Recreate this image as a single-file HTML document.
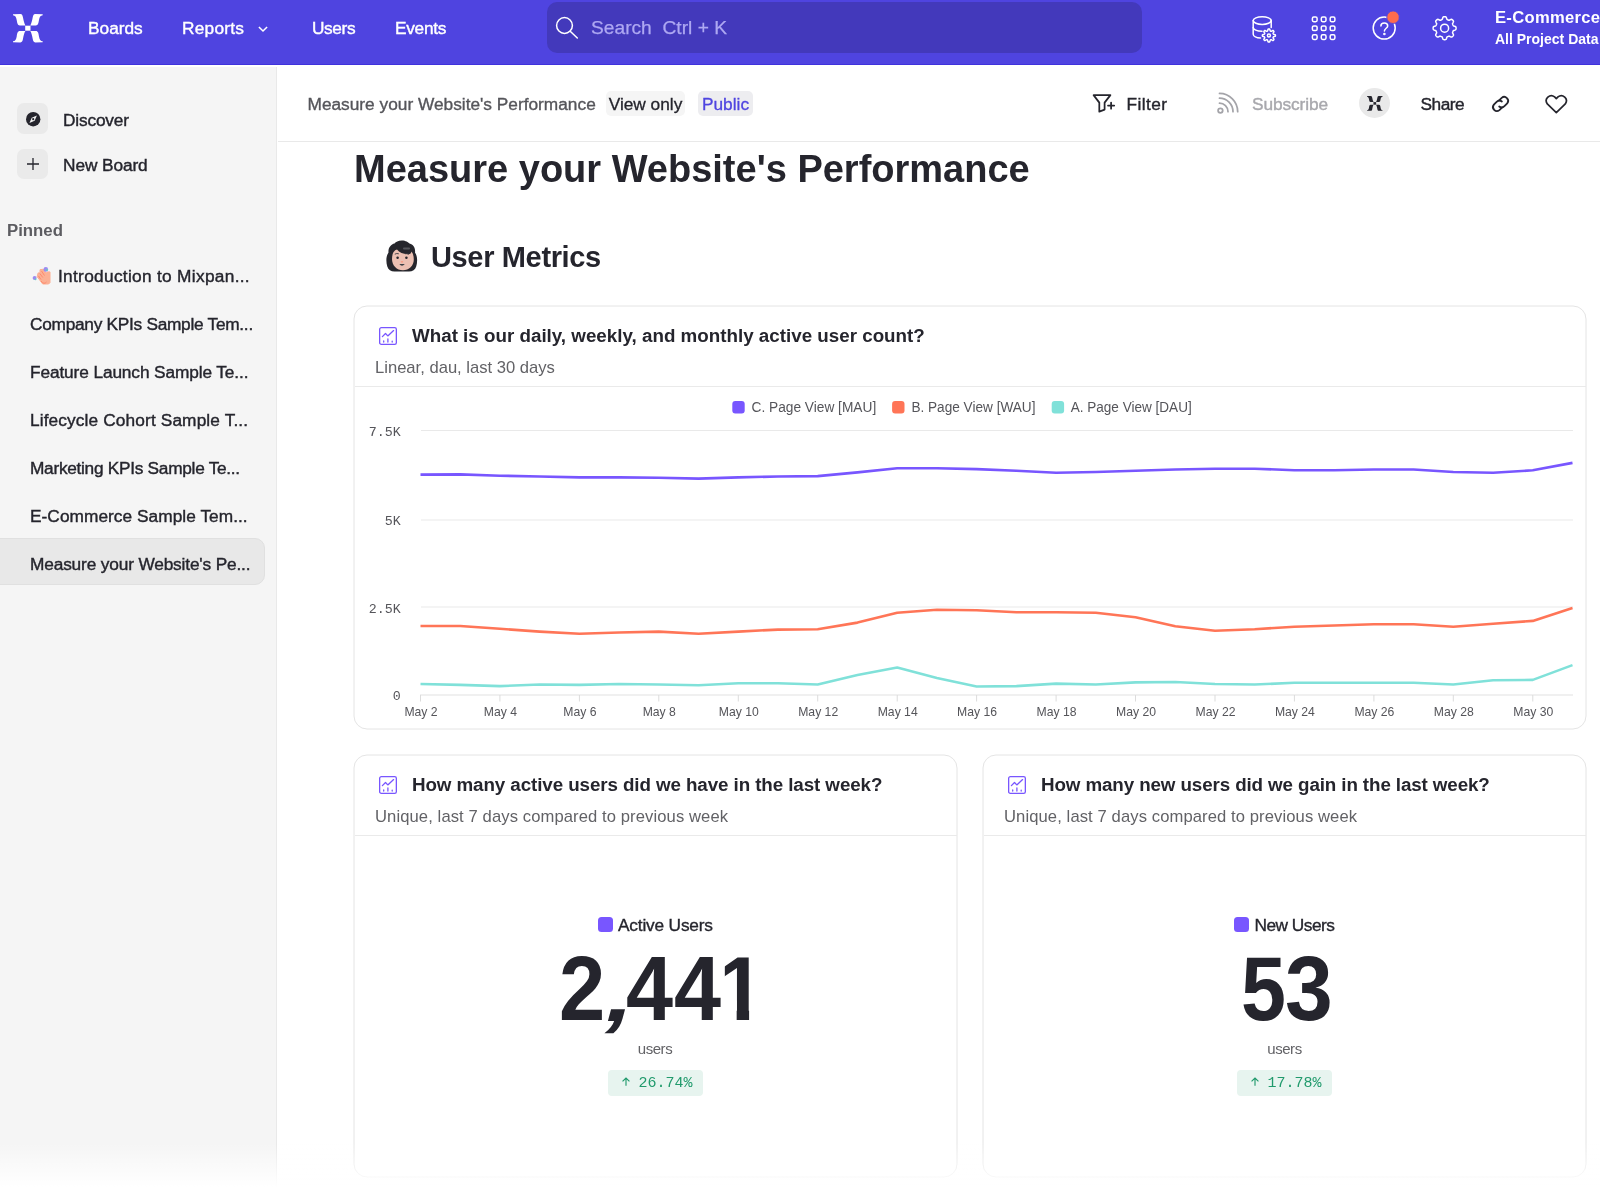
<!DOCTYPE html>
<html lang="en">
<head>
<meta charset="utf-8">
<title>Measure your Website's Performance</title>
<style>
*{box-sizing:border-box;margin:0;padding:0}
html,body{width:1600px;height:1187px;overflow:hidden;background:#fff}
body{font-family:"Liberation Sans",sans-serif;color:#25252d;position:relative}
#root{position:absolute;left:0;top:0;width:1600px;height:1187px;will-change:transform;overflow:hidden}
.abs{position:absolute;white-space:nowrap}
svg{overflow:visible}
/* header */
#hdr{position:absolute;left:0;top:0;width:1600px;height:65px;background:#4f44e0;overflow:hidden;border-bottom:1px solid #3f32dc}
#hdr .nav{position:absolute;top:17px;font-size:17.3px;line-height:22px;color:#fff;white-space:nowrap;-webkit-text-stroke:0.4px #fff}
#search{position:absolute;left:547px;top:2px;width:595px;height:51px;border-radius:10px;background:#4339bb}
#search span{position:absolute;left:44px;top:14px;font-size:19.2px;line-height:24px;color:#aea8f2;white-space:nowrap;-webkit-text-stroke:0.25px #aea8f2}
/* sidebar */
#side{position:absolute;left:0;top:65px;width:277px;height:1122px;background:#f5f5f5;border-right:1px solid #e9e9e9}
.sbtn{position:absolute;left:17px;width:31px;height:30px;border-radius:7px;background:#eaeaea}
.slabel{position:absolute;left:63px;font-size:17.3px;line-height:22px;color:#25252d;white-space:nowrap;-webkit-text-stroke:0.4px #25252d}
.pin{position:absolute;left:30px;font-size:17.3px;line-height:22px;color:#25252d;white-space:nowrap;-webkit-text-stroke:0.4px #25252d}
#sel{position:absolute;left:-1px;top:473px;width:266px;height:47px;background:#e8e8e8;border-radius:0 10px 10px 0;border:1px solid #e0e0e0}
/* sub header */
#sub{position:absolute;left:278px;top:65px;width:1322px;height:77px;background:#fff;border-bottom:1px solid #e9e9e9}
.pill{position:absolute;top:26px;height:25px;border-radius:5px;font-size:17.3px;line-height:26.5px;text-align:center;white-space:nowrap}
.act{position:absolute;top:27.5px;font-size:17.3px;line-height:22px;white-space:nowrap;color:#25252d;-webkit-text-stroke:0.4px #25252d}
/* main */
h1{position:absolute;left:354px;top:145px;font-size:38px;line-height:48px;font-weight:700;color:#25252d;white-space:nowrap}
h2{position:absolute;left:431px;top:238px;font-size:29px;line-height:38px;font-weight:700;color:#25252d;white-space:nowrap;letter-spacing:-0.35px}
.card{position:absolute;background:transparent;border:1px solid transparent;border-radius:13px}
.cb{position:absolute;border:1px solid #e4e4e4;border-radius:13.5px;transform:translate(-0.5px,-0.5px);background:#fff}
.card .hd{position:absolute;left:0;top:0;right:0;height:80px;border-bottom:1px solid #eaeaea}
.card .ttl{position:absolute;left:57px;top:17px;font-size:18.8px;line-height:24px;font-weight:700;color:#25252d;white-space:nowrap}
.card .st{position:absolute;left:20px;top:50px;font-size:16.6px;line-height:22px;color:#626266;white-space:nowrap}
.card .ico{position:absolute;left:23.8px;top:19.8px;width:18px;height:18px}
.mlabel{position:absolute;font-size:17.3px;line-height:22px;color:#25252d;white-space:nowrap;-webkit-text-stroke:0.35px #25252d}
.sq{position:absolute;width:15px;height:15px;border-radius:3.5px;background:#7856ff}
.big{position:absolute;font-size:90px;line-height:100px;font-weight:700;color:#25252d;white-space:nowrap;transform-origin:50% 50%}
.bigw{position:absolute;left:0;top:938.55px;height:100px;width:0}
.bigw span{position:absolute;top:0;font-size:90px;line-height:100px;font-weight:700;color:#25252d;transform-origin:0 0;white-space:nowrap}
.unit{position:absolute;letter-spacing:-0.45px;font-size:15px;line-height:18px;color:#626266;white-space:nowrap}
.badge{position:absolute;height:26px;border-radius:4px;background:#e7f4ef}
.badge span{position:absolute;top:1px;font-family:"Liberation Mono",monospace;font-size:15px;line-height:26px;color:#209a6c;white-space:nowrap}
#fade{position:absolute;left:0;top:1143px;width:1600px;height:44px;background:linear-gradient(to bottom,rgba(255,255,255,0),rgba(255,255,255,1))}
</style>
</head>
<body>
<div id="root">

<!-- SIDEBAR -->
<div id="side">
  <div class="sbtn" style="top:38px;height:31px"></div>
  <svg class="abs" style="left:25.5px;top:46.5px" width="14.4" height="14.4" viewBox="0 0 20 20"><circle cx="10" cy="10" r="10" fill="#25252d"/><path d="M15.2 4.8 L12 12 L4.8 15.2 L8 8 Z" fill="#f0f0f0"/><circle cx="10" cy="10" r="1.5" fill="#25252d"/></svg>
  <div class="slabel" style="top:44px;letter-spacing:-0.17px">Discover</div>
  <div class="sbtn" style="top:84px"></div>
  <svg class="abs" style="left:26.5px;top:93.3px" width="12" height="12" viewBox="0 0 12 12"><path d="M6 0V12M0 6H12" stroke="#25252d" stroke-width="1.3" fill="none"/></svg>
  <div class="slabel" style="top:89px;letter-spacing:-0.1px">New Board</div>
  <div class="abs" style="left:7px;top:154.5px;font-size:16.8px;line-height:22px;color:#5c5c61;font-weight:700">Pinned</div>
  <div id="sel"></div>
  <svg class="abs" style="left:32px;top:201px" width="20" height="20" viewBox="32 266 20 20">
    <path d="M40 269.7 L43.5 269.2 L46 273.2 L47.3 271.9 L50 271.9 L50 282.6 L48.6 284 L42.7 284 L37.2 276.7 L38.1 272.9 L40 272.9 Z" fill="#fbb094" stroke="#fbb094" stroke-width="1" stroke-linejoin="round"/>
    <path d="M41.5 271 L44.5 275.5 M39.8 273.5 L42.8 277.5 M38.5 276 L41 279.5 M41 281 Q44 285 46.5 282" stroke="#ff8a6d" stroke-width="1" fill="none"/>
    <circle cx="45.8" cy="269.4" r="2.3" fill="#9b8cf0"/><circle cx="34.6" cy="278.1" r="2" fill="#9b8cf0"/>
    <circle cx="46.8" cy="270" r="1" fill="#5fd4c0"/><circle cx="35.5" cy="279.3" r="0.9" fill="#5fd4c0"/>
  </svg>
  <div class="pin" style="top:199.5px;left:58px;letter-spacing:0.3px">Introduction to Mixpan...</div>
  <div class="pin" style="top:247.5px;letter-spacing:-0.28px">Company KPIs Sample Tem...</div>
  <div class="pin" style="top:295.5px;letter-spacing:-0.12px">Feature Launch Sample Te...</div>
  <div class="pin" style="top:343.5px;letter-spacing:0.12px">Lifecycle Cohort Sample T...</div>
  <div class="pin" style="top:391.5px;letter-spacing:-0.29px">Marketing KPIs Sample Te...</div>
  <div class="pin" style="top:439.5px;letter-spacing:0.04px">E-Commerce Sample Tem...</div>
  <div class="pin" style="top:487.5px;letter-spacing:-0.16px">Measure your Website's Pe...</div>
</div>

<div class="abs" style="left:0;top:65px;width:278px;height:2px;background:#fff"></div>
<!-- SUB HEADER -->
<div id="sub">
  <div class="abs" style="left:29.5px;top:27.5px;font-size:17.3px;line-height:22px;color:#55555a;-webkit-text-stroke:0.35px #55555a">Measure your Website's Performance</div>
  <div class="pill" style="left:328px;width:79px;background:#f5f5f5;color:#25252d;-webkit-text-stroke:0.3px #25252d">View only</div>
  <div class="pill" style="left:420px;width:55px;background:#ededf0;color:#4f44e0;-webkit-text-stroke:0.3px #4f44e0">Public</div>
  <!-- filter icon -->
  <svg class="abs" style="left:814px;top:28px" width="24" height="20" viewBox="1092 93 24 20" fill="none" stroke="#25252d" stroke-width="1.75" stroke-linejoin="round" stroke-linecap="round">
    <path d="M1093.6 95.1 H1110.4 L1104.6 102.6 V109.6 L1099.3 111.6 V102.6 Z"/>
    <path d="M1111.1 102.5 V108.7 M1108 105.6 H1114.2"/>
  </svg>
  <div class="act" style="left:848.5px;letter-spacing:0.4px">Filter</div>
  <!-- rss -->
  <svg class="abs" style="left:938px;top:27px" width="23" height="22" viewBox="1216 92 23 22" fill="none" stroke="#a4a4a9" stroke-width="1.75" stroke-linecap="round">
    <circle cx="1220.4" cy="110.6" r="2.3"/>
    <path d="M1219.5 103.2 A8.6 8.6 0 0 1 1228 111.7"/>
    <path d="M1219.5 98.2 A13.6 13.6 0 0 1 1233 111.7"/>
    <path d="M1219.5 93.4 A18.3 18.3 0 0 1 1237.7 111.7"/>
  </svg>
  <div class="act" style="left:974px;letter-spacing:-0.1px;color:#a8a8ad;-webkit-text-stroke:0.4px #a8a8ad">Subscribe</div>
  <!-- avatar -->
  <div class="abs" style="left:1081px;top:23px;width:31px;height:30px;border-radius:50%;background:#e9e9e9"></div>
  <svg class="abs" style="left:1088.7px;top:30.8px" width="15.6" height="14.8" viewBox="0 0 29.7 28.4"><use href="#mxlogo" fill="#25252d"/></svg>
  <div class="act" style="left:1142.5px;letter-spacing:-0.5px">Share</div>
  <!-- link -->
  <svg class="abs" style="left:1212.4px;top:28.6px" width="21.4" height="20.3" viewBox="1491 94 20 19" fill="none" stroke="#25252d" stroke-width="1.7" stroke-linecap="round">
    <path d="M1499.3 100.2 L1501.9 97.6 A3.7 3.7 0 0 1 1507.1 102.8 L1504.5 105.4 A3.7 3.7 0 0 1 1499.6 105.7"/>
    <path d="M1502.4 106.5 L1499.8 109.1 A3.7 3.7 0 0 1 1494.6 103.9 L1497.2 101.3 A3.7 3.7 0 0 1 1502.1 101"/>
  </svg>
  <!-- heart -->
  <svg class="abs" style="left:1266px;top:29.8px" width="24" height="20" viewBox="1544 94 24 20" fill="none" stroke="#25252d" stroke-width="1.7" stroke-linejoin="round">
    <path d="M1556.3 111.6 L1547.3 102.9 A5.1 5.1 0 0 1 1554.6 95.9 L1556.3 97.7 L1558 95.9 A5.1 5.1 0 0 1 1565.3 102.9 Z"/>
  </svg>
</div>

<!-- MAIN -->
<h1>Measure your Website's Performance</h1>
<!-- woman emoji -->
<svg class="abs" style="left:386px;top:240px" width="32" height="32" viewBox="386 240 32 32">
  <path d="M401.8 240.6 C406 240.6 408 242.5 409.5 243.6 C413.5 244.5 415.6 248.5 415 252.5 C417.6 256 417.6 262 416.2 266.5 C415.2 270 412.5 271.6 409 271.6 L394.5 271.6 C391 271.6 388.3 270 387.3 266.5 C385.9 262 385.9 256 388.5 252.5 C388 248 391 244.3 394.5 243.6 C396 242 398 240.6 401.8 240.6 Z" fill="#26262c"/>
  <path d="M392 259 C392 252.5 395 249.8 397 249.6 C399.5 253 404 254.5 408.5 254.2 C410.5 254.2 411.5 252.8 411.3 251.5 C413.3 253.6 413.8 256.6 413.8 259.5 C413.8 265.8 409 270.3 402.9 270.3 C396.8 270.3 392 265.5 392 259 Z" fill="#ecc0b2"/>
  <circle cx="397.6" cy="257.7" r="1.25" fill="#26262c"/><circle cx="406.4" cy="257.7" r="1.25" fill="#26262c"/>
  <path d="M394.8 254.2 Q396.8 253 398.8 253.8 M405 253.8 Q407 253 409 254.2" stroke="#3a3a40" stroke-width="0.9" fill="none"/>
  <path d="M399.3 264 Q402 267.6 404.8 264 Z" fill="#3a3f45"/>
  <path d="M400.9 261.6 Q402 262.6 403.1 261.6" stroke="#ff8a6d" stroke-width="0.9" fill="none"/>
  <rect x="403" y="247.6" width="7" height="1.9" rx="0.9" fill="#55555b"/>
</svg>
<h2>User Metrics</h2>

<div class="cb" style="left:354px;top:306px;width:1233px;height:423.5px"></div>
<div class="card" id="c1" style="left:354px;top:306px;width:1233px;height:423px">
  <div class="hd"></div>
  <svg class="ico" viewBox="0 0 18 18" fill="none" stroke="#7856ff" stroke-width="1.3" stroke-linecap="round" stroke-linejoin="round"><use href="#chartico"/></svg>
  <div class="ttl">What is our daily, weekly, and monthly active user count?</div>
  <div class="st">Linear, dau, last 30 days</div>
</div>
<svg id="chart" style="position:absolute;left:0;top:0" width="1600" height="740" viewBox="0 0 1600 740">
<rect x="421" y="430" width="1152" height="1" fill="#e9e9e9"/>
<rect x="421" y="519.5" width="1152" height="1" fill="#e9e9e9"/>
<rect x="421" y="606.5" width="1152" height="1" fill="#e9e9e9"/>
<rect x="420" y="694.5" width="1153" height="1" fill="#e2e2e2"/>
<rect x="420.0" y="695" width="1" height="6.5" fill="#dcdcdc"/>
<rect x="499.4" y="695" width="1" height="6.5" fill="#dcdcdc"/>
<rect x="578.9" y="695" width="1" height="6.5" fill="#dcdcdc"/>
<rect x="658.3" y="695" width="1" height="6.5" fill="#dcdcdc"/>
<rect x="737.8" y="695" width="1" height="6.5" fill="#dcdcdc"/>
<rect x="817.2" y="695" width="1" height="6.5" fill="#dcdcdc"/>
<rect x="896.7" y="695" width="1" height="6.5" fill="#dcdcdc"/>
<rect x="976.1" y="695" width="1" height="6.5" fill="#dcdcdc"/>
<rect x="1055.6" y="695" width="1" height="6.5" fill="#dcdcdc"/>
<rect x="1135.0" y="695" width="1" height="6.5" fill="#dcdcdc"/>
<rect x="1214.5" y="695" width="1" height="6.5" fill="#dcdcdc"/>
<rect x="1293.9" y="695" width="1" height="6.5" fill="#dcdcdc"/>
<rect x="1373.4" y="695" width="1" height="6.5" fill="#dcdcdc"/>
<rect x="1452.8" y="695" width="1" height="6.5" fill="#dcdcdc"/>
<rect x="1532.3" y="695" width="1" height="6.5" fill="#dcdcdc"/>
<polyline fill="none" stroke="#7856ff" stroke-width="2.6" stroke-linejoin="round" stroke-linecap="butt" points="420.5,474.6 460.2,474.4 499.9,475.7 539.7,476.5 579.4,477.4 619.1,477.4 658.8,477.8 698.6,478.6 738.3,477.4 778.0,476.5 817.7,476.1 857.5,472.4 897.2,468.3 936.9,468.3 976.6,469.1 1016.4,470.8 1056.1,472.8 1095.8,472.0 1135.5,470.8 1175.3,469.5 1215.0,468.7 1254.7,468.7 1294.4,470.3 1334.2,470.3 1373.9,469.5 1413.6,469.5 1453.3,472.0 1493.1,472.8 1532.8,470.3 1572.5,462.9"/>
<polyline fill="none" stroke="#ff7557" stroke-width="2.6" stroke-linejoin="round" stroke-linecap="butt" points="420.5,626.0 460.2,626.0 499.9,628.8 539.7,631.6 579.4,633.7 619.1,632.5 658.8,631.6 698.6,633.7 738.3,631.6 778.0,629.6 817.7,629.2 857.5,622.6 897.2,612.7 936.9,609.8 976.6,610.2 1016.4,612.3 1056.1,612.3 1095.8,612.7 1135.5,617.2 1175.3,626.3 1215.0,630.8 1254.7,629.2 1294.4,626.7 1334.2,625.5 1373.9,624.2 1413.6,624.2 1453.3,626.7 1493.1,623.8 1532.8,620.9 1572.5,608.1"/>
<polyline fill="none" stroke="#80e1d9" stroke-width="2.6" stroke-linejoin="round" stroke-linecap="butt" points="420.5,684.0 460.2,684.9 499.9,686.1 539.7,684.5 579.4,684.9 619.1,684.0 658.8,684.5 698.6,685.3 738.3,683.2 778.0,683.2 817.7,684.5 857.5,675.0 897.2,667.5 936.9,677.9 976.6,686.5 1016.4,686.1 1056.1,683.6 1095.8,684.5 1135.5,682.4 1175.3,682.0 1215.0,684.0 1254.7,684.5 1294.4,682.8 1334.2,682.8 1373.9,682.8 1413.6,682.8 1453.3,684.5 1493.1,680.3 1532.8,679.9 1572.5,665.1"/>
<text x="400.7" y="436" text-anchor="end" font-family="Liberation Mono, monospace" font-size="13.3" fill="#55555a">7.5K</text>
<text x="400.7" y="524.5" text-anchor="end" font-family="Liberation Mono, monospace" font-size="13.3" fill="#55555a">5K</text>
<text x="400.7" y="612.5" text-anchor="end" font-family="Liberation Mono, monospace" font-size="13.3" fill="#55555a">2.5K</text>
<text x="400.7" y="700" text-anchor="end" font-family="Liberation Mono, monospace" font-size="13.3" fill="#55555a">0</text>
<text x="421.0" y="716" text-anchor="middle" font-family="Liberation Sans, sans-serif" font-size="12.2" fill="#55555a">May 2</text>
<text x="500.4" y="716" text-anchor="middle" font-family="Liberation Sans, sans-serif" font-size="12.2" fill="#55555a">May 4</text>
<text x="579.9" y="716" text-anchor="middle" font-family="Liberation Sans, sans-serif" font-size="12.2" fill="#55555a">May 6</text>
<text x="659.3" y="716" text-anchor="middle" font-family="Liberation Sans, sans-serif" font-size="12.2" fill="#55555a">May 8</text>
<text x="738.8" y="716" text-anchor="middle" font-family="Liberation Sans, sans-serif" font-size="12.2" fill="#55555a">May 10</text>
<text x="818.2" y="716" text-anchor="middle" font-family="Liberation Sans, sans-serif" font-size="12.2" fill="#55555a">May 12</text>
<text x="897.7" y="716" text-anchor="middle" font-family="Liberation Sans, sans-serif" font-size="12.2" fill="#55555a">May 14</text>
<text x="977.1" y="716" text-anchor="middle" font-family="Liberation Sans, sans-serif" font-size="12.2" fill="#55555a">May 16</text>
<text x="1056.6" y="716" text-anchor="middle" font-family="Liberation Sans, sans-serif" font-size="12.2" fill="#55555a">May 18</text>
<text x="1136.0" y="716" text-anchor="middle" font-family="Liberation Sans, sans-serif" font-size="12.2" fill="#55555a">May 20</text>
<text x="1215.5" y="716" text-anchor="middle" font-family="Liberation Sans, sans-serif" font-size="12.2" fill="#55555a">May 22</text>
<text x="1294.9" y="716" text-anchor="middle" font-family="Liberation Sans, sans-serif" font-size="12.2" fill="#55555a">May 24</text>
<text x="1374.4" y="716" text-anchor="middle" font-family="Liberation Sans, sans-serif" font-size="12.2" fill="#55555a">May 26</text>
<text x="1453.8" y="716" text-anchor="middle" font-family="Liberation Sans, sans-serif" font-size="12.2" fill="#55555a">May 28</text>
<text x="1533.3" y="716" text-anchor="middle" font-family="Liberation Sans, sans-serif" font-size="12.2" fill="#55555a">May 30</text>
<rect x="732.3" y="401" width="12.4" height="12.4" rx="3" fill="#7856ff"/>
<text x="751.5" y="412.3" font-family="Liberation Sans, sans-serif" font-size="14" textLength="124.7" lengthAdjust="spacingAndGlyphs" fill="#55555a">C. Page View [MAU]</text>
<rect x="892.1" y="401" width="12.4" height="12.4" rx="3" fill="#ff7557"/>
<text x="911.4" y="412.3" font-family="Liberation Sans, sans-serif" font-size="14" textLength="124.1" lengthAdjust="spacingAndGlyphs" fill="#55555a">B. Page View [WAU]</text>
<rect x="1051.7" y="401" width="12.4" height="12.4" rx="3" fill="#80e1d9"/>
<text x="1070.7" y="412.3" font-family="Liberation Sans, sans-serif" font-size="14" textLength="121" lengthAdjust="spacingAndGlyphs" fill="#55555a">A. Page View [DAU]</text>
</svg>

<div class="cb" style="left:354px;top:755px;width:604px;height:423.3px"></div>
<div class="card" id="c2" style="left:354px;top:755px;width:604px;height:421px">
  <div class="hd"></div>
  <svg class="ico" viewBox="0 0 18 18" fill="none" stroke="#7856ff" stroke-width="1.3" stroke-linecap="round" stroke-linejoin="round"><use href="#chartico"/></svg>
  <div class="ttl" style="letter-spacing:-0.09px">How many active users did we have in the last week?</div>
  <div class="st" style="letter-spacing:0.1px">Unique, last 7 days compared to previous week</div>
</div>
<div class="sq" style="left:598px;top:917.3px"></div>
<div class="mlabel" style="left:618px;top:914px;letter-spacing:-0.18px">Active Users</div>
<div class="bigw" id="big1"><span style="left:558.63px;transform:scaleX(0.923)">2</span><span style="left:600.9px;transform-origin:0 81.2px;transform:translateY(0.9px) skewX(-15deg) scale(1.1,0.88)">,</span><span style="left:626.06px;transform:scaleX(0.939)">4</span><span style="left:674.26px;transform:scaleX(0.939)">4</span><span style="left:716.55px;transform:scaleX(0.95);clip-path:polygon(8px 0,34px 0,34px 100px,20.7px 100px,20.7px 62px,8px 62px)">1</span></div>
<div class="unit" style="left:605px;width:100px;text-align:center;top:1039.5px">users</div>
<div class="badge" style="left:608px;top:1069.5px;width:95px">
  <svg class="abs" style="left:13.9px;top:7.9px" width="8" height="9.4" viewBox="0 0 8.4 9.4" fill="none" stroke="#209a6c" stroke-width="1.2"><path d="M4.2 8.9V0.9M0.6 4.4L4.2 0.8L7.8 4.4"/></svg>
  <span style="left:30.5px">26.74%</span>
</div>

<div class="cb" style="left:983px;top:755px;width:604px;height:423.3px"></div>
<div class="card" id="c3" style="left:983px;top:755px;width:604px;height:421px">
  <div class="hd"></div>
  <svg class="ico" viewBox="0 0 18 18" fill="none" stroke="#7856ff" stroke-width="1.3" stroke-linecap="round" stroke-linejoin="round"><use href="#chartico"/></svg>
  <div class="ttl" style="letter-spacing:-0.11px">How many new users did we gain in the last week?</div>
  <div class="st" style="letter-spacing:0.1px">Unique, last 7 days compared to previous week</div>
</div>
<div class="sq" style="left:1233.7px;top:917.3px"></div>
<div class="mlabel" style="left:1254.5px;top:914px;letter-spacing:-0.5px">New Users</div>
<div class="bigw" id="big2"><span style="left:1240.7px;transform:scaleX(0.898)">5</span><span style="left:1285.3px;transform:scaleX(0.953)">3</span></div>
<div class="unit" style="left:1234.5px;width:100px;text-align:center;top:1039.5px">users</div>
<div class="badge" style="left:1237px;top:1069.5px;width:95px">
  <svg class="abs" style="left:13.9px;top:7.9px" width="8" height="9.4" viewBox="0 0 8.4 9.4" fill="none" stroke="#209a6c" stroke-width="1.2"><path d="M4.2 8.9V0.9M0.6 4.4L4.2 0.8L7.8 4.4"/></svg>
  <span style="left:30.5px">17.78%</span>
</div>

<div id="fade"></div>

<!-- HEADER -->
<div id="hdr">
  <svg class="abs" style="left:12.8px;top:13.6px" width="29.7" height="28.4" viewBox="0 0 29.7 28.4">
    <defs>
      <g id="mxlogo">
        <path id="mxw" d="M0 0.2 L7.4 0 C9.2 0 9.6 1.6 10 3.6 C10.6 6.8 11.2 9.4 12.4 11.4 L6.8 11.4 C4.6 11.4 4.2 9 3.7 6 C3.2 3 2.2 1.4 0 1.2 Z"/>
        <use href="#mxw" transform="translate(29.7,0) scale(-1,1)"/>
        <use href="#mxw" transform="translate(0,28.4) scale(1,-1)"/>
        <use href="#mxw" transform="translate(29.7,28.4) scale(-1,-1)"/>
        <rect x="12.2" y="11.7" width="5.3" height="5"/>
      </g>
      <g id="chartico">
        <rect x="0.65" y="0.65" width="16.7" height="16.7" rx="1.7"/>
        <path d="M3.4 9.6 L6.5 6.5 L8.8 8.9 L14.6 3.6"/>
        <path d="M4.7 13.9V15.1M8.9 12V15.1M13.2 14.1V15.1"/>
      </g>
    </defs>
    <use href="#mxlogo" fill="#fff"/>
  </svg>
  <div class="nav" style="left:88px">Boards</div>
  <div class="nav" style="left:182px;letter-spacing:0.25px">Reports</div>
  <svg class="abs" style="left:258.4px;top:25.7px" width="10" height="6.4" viewBox="0 0 11 7" fill="none" stroke="#fff" stroke-width="1.7"><path d="M1 1L5.5 5.5L10 1"/></svg>
  <div class="nav" style="left:312px;letter-spacing:-0.4px">Users</div>
  <div class="nav" style="left:395px;letter-spacing:-0.3px">Events</div>
  <div id="search">
    <svg class="abs" style="left:8px;top:14px" width="24" height="24" viewBox="555 16 24 24" fill="none" stroke="#fff" stroke-width="1.5" stroke-linecap="round"><circle cx="564.5" cy="25.5" r="7.9"/><path d="M570.2 31.2 L577.3 38"/></svg>
    <span>Search&nbsp; Ctrl + K</span>
  </div>
  <!-- db icon -->
  <svg class="abs" style="left:1251px;top:15px" width="27" height="29" viewBox="1251 15 27 29" fill="none" stroke="#fff" stroke-width="1.5" stroke-linecap="round" stroke-linejoin="round">
    <ellipse cx="1262.2" cy="20.6" rx="9" ry="3.8"/>
    <path d="M1253.2 20.6 V34.2 C1253.2 36.2 1256.5 37.8 1260.5 38"/>
    <path d="M1271.2 20.6 V27.6"/>
    <path d="M1253.2 27.4 C1253.2 29.5 1257 31.2 1262 31.2"/>
    <g transform="translate(1268.9,35.5)">
      <path id="gear8s" d="M0.00 -6.55 L0.43 -6.51 L0.83 -6.30 L1.09 -5.49 L1.26 -4.68 L1.50 -4.43 L1.78 -4.30 L2.07 -4.19 L2.42 -4.20 L3.11 -4.66 L3.87 -5.04 L4.30 -4.91 L4.63 -4.63 L4.91 -4.30 L5.04 -3.87 L4.66 -3.11 L4.20 -2.42 L4.19 -2.07 L4.30 -1.78 L4.43 -1.50 L4.68 -1.26 L5.49 -1.09 L6.30 -0.83 L6.51 -0.43 L6.55 0.00 L6.51 0.43 L6.30 0.83 L5.49 1.09 L4.68 1.26 L4.43 1.50 L4.30 1.78 L4.19 2.07 L4.20 2.42 L4.66 3.11 L5.04 3.87 L4.91 4.30 L4.63 4.63 L4.30 4.91 L3.87 5.04 L3.11 4.66 L2.42 4.20 L2.07 4.19 L1.78 4.30 L1.50 4.43 L1.26 4.68 L1.09 5.49 L0.83 6.30 L0.43 6.51 L0.00 6.55 L-0.43 6.51 L-0.83 6.30 L-1.09 5.49 L-1.26 4.68 L-1.50 4.43 L-1.78 4.30 L-2.07 4.19 L-2.42 4.20 L-3.11 4.66 L-3.87 5.04 L-4.30 4.91 L-4.63 4.63 L-4.91 4.30 L-5.04 3.87 L-4.66 3.11 L-4.20 2.42 L-4.19 2.07 L-4.30 1.78 L-4.43 1.50 L-4.68 1.26 L-5.49 1.09 L-6.30 0.83 L-6.51 0.43 L-6.55 0.00 L-6.51 -0.43 L-6.30 -0.83 L-5.49 -1.09 L-4.68 -1.26 L-4.43 -1.50 L-4.30 -1.78 L-4.19 -2.07 L-4.20 -2.42 L-4.66 -3.11 L-5.04 -3.87 L-4.91 -4.30 L-4.63 -4.63 L-4.30 -4.91 L-3.87 -5.04 L-3.11 -4.66 L-2.42 -4.20 L-2.07 -4.19 L-1.78 -4.30 L-1.50 -4.43 L-1.26 -4.68 L-1.09 -5.49 L-0.83 -6.30 L-0.43 -6.51 Z" fill="#4f44e0"/>
      <circle cx="0" cy="0" r="1.5"/>
    </g>
  </svg>
  <!-- grid icon -->
  <svg class="abs" style="left:1311px;top:16px" width="26" height="26" viewBox="1311 16 26 26" fill="none" stroke="#fff" stroke-width="1.5">
    <g id="g3"><rect x="1312.4" y="17" width="4.7" height="4.7" rx="1.4"/><rect x="1321.3" y="17" width="4.7" height="4.7" rx="1.4"/><rect x="1330.2" y="17" width="4.7" height="4.7" rx="1.4"/></g>
    <use href="#g3" y="8.9"/><use href="#g3" y="17.8"/>
  </svg>
  <!-- help -->
  <svg class="abs" style="left:1371px;top:10px" width="30" height="32" viewBox="1371 10 30 32" fill="none" stroke="#fff" stroke-width="1.5" stroke-linecap="round">
    <circle cx="1384.2" cy="28.1" r="11"/>
    <path d="M1380.9 26 C1380.9 24 1382.4 23.1 1384.3 23.1 C1386.3 23.1 1387.7 24.2 1387.7 25.9 C1387.7 28.3 1384.4 28.3 1384.4 31.1"/>
    <circle cx="1384.4" cy="34" r="0.55" fill="#fff"/>
    <circle cx="1393.1" cy="17.2" r="6.3" fill="#ff6c4d" stroke="#4f44e0" stroke-width="0.9"/>
  </svg>
  <!-- gear -->
  <svg class="abs" style="left:1431px;top:15px" width="27" height="27" viewBox="1431 15 27 27" fill="none" stroke="#fff" stroke-width="1.5" stroke-linejoin="round">
    <g transform="translate(1444.6,28.2)">
      <path d="M0.00 -11.45 L0.45 -11.43 L0.90 -11.38 L1.33 -11.22 L1.71 -10.82 L1.99 -10.00 L2.20 -9.18 L2.47 -8.76 L2.78 -8.55 L3.10 -8.40 L3.43 -8.27 L3.75 -8.13 L4.08 -8.01 L4.45 -7.94 L4.93 -8.05 L5.67 -8.48 L6.44 -8.86 L7.00 -8.88 L7.41 -8.68 L7.77 -8.40 L8.10 -8.10 L8.40 -7.77 L8.68 -7.41 L8.88 -7.00 L8.86 -6.44 L8.48 -5.67 L8.05 -4.93 L7.94 -4.45 L8.01 -4.08 L8.13 -3.75 L8.27 -3.43 L8.40 -3.10 L8.55 -2.78 L8.76 -2.47 L9.18 -2.20 L10.00 -1.99 L10.82 -1.71 L11.22 -1.33 L11.38 -0.90 L11.43 -0.45 L11.45 0.00 L11.43 0.45 L11.38 0.90 L11.22 1.33 L10.82 1.71 L10.00 1.99 L9.18 2.20 L8.76 2.47 L8.55 2.78 L8.40 3.10 L8.27 3.43 L8.13 3.75 L8.01 4.08 L7.94 4.45 L8.05 4.93 L8.48 5.67 L8.86 6.44 L8.88 7.00 L8.68 7.41 L8.40 7.77 L8.10 8.10 L7.77 8.40 L7.41 8.68 L7.00 8.88 L6.44 8.86 L5.67 8.48 L4.93 8.05 L4.45 7.94 L4.08 8.01 L3.75 8.13 L3.43 8.27 L3.10 8.40 L2.78 8.55 L2.47 8.76 L2.20 9.18 L1.99 10.00 L1.71 10.82 L1.33 11.22 L0.90 11.38 L0.45 11.43 L0.00 11.45 L-0.45 11.43 L-0.90 11.38 L-1.33 11.22 L-1.71 10.82 L-1.99 10.00 L-2.20 9.18 L-2.47 8.76 L-2.78 8.55 L-3.10 8.40 L-3.43 8.27 L-3.75 8.13 L-4.08 8.01 L-4.45 7.94 L-4.93 8.05 L-5.67 8.48 L-6.44 8.86 L-7.00 8.88 L-7.41 8.68 L-7.77 8.40 L-8.10 8.10 L-8.40 7.77 L-8.68 7.41 L-8.88 7.00 L-8.86 6.44 L-8.48 5.67 L-8.05 4.93 L-7.94 4.45 L-8.01 4.08 L-8.13 3.75 L-8.27 3.43 L-8.40 3.10 L-8.55 2.78 L-8.76 2.47 L-9.18 2.20 L-10.00 1.99 L-10.82 1.71 L-11.22 1.33 L-11.38 0.90 L-11.43 0.45 L-11.45 0.00 L-11.43 -0.45 L-11.38 -0.90 L-11.22 -1.33 L-10.82 -1.71 L-10.00 -1.99 L-9.18 -2.20 L-8.76 -2.47 L-8.55 -2.78 L-8.40 -3.10 L-8.27 -3.43 L-8.13 -3.75 L-8.01 -4.08 L-7.94 -4.45 L-8.05 -4.93 L-8.48 -5.67 L-8.86 -6.44 L-8.88 -7.00 L-8.68 -7.41 L-8.40 -7.77 L-8.10 -8.10 L-7.77 -8.40 L-7.41 -8.68 L-7.00 -8.88 L-6.44 -8.86 L-5.67 -8.48 L-4.93 -8.05 L-4.45 -7.94 L-4.08 -8.01 L-3.75 -8.13 L-3.43 -8.27 L-3.10 -8.40 L-2.78 -8.55 L-2.47 -8.76 L-2.20 -9.18 L-1.99 -10.00 L-1.71 -10.82 L-1.33 -11.22 L-0.90 -11.38 L-0.45 -11.43 Z"/>
      <circle cx="0" cy="0" r="4"/>
    </g>
  </svg>
  <div class="abs" style="left:1495px;top:7px;font-size:16.6px;line-height:22px;color:#fff;font-weight:700;letter-spacing:0.3px">E-Commerce</div>
  <div class="abs" style="left:1495px;top:29.5px;font-size:14px;line-height:18px;color:#fff;font-weight:700">All Project Data</div>
</div>

</div>
</body>
</html>
